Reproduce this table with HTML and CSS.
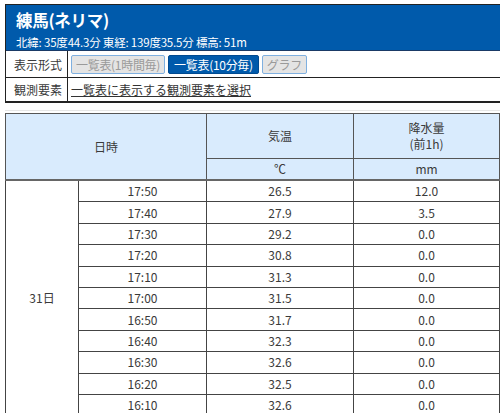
FILE: index.html
```html
<!DOCTYPE html>
<html lang="ja">
<head>
<meta charset="utf-8">
<link rel="stylesheet" href="styles.css">
</head>
<body>
<div class="page">
  <div class="station">
    <div class="station-head">
      <h1 class="station-name">練馬(ネリマ)</h1>
      <div class="station-meta">北緯: 35度44.3分 東経: 139度35.5分 標高: 51m</div>
    </div>
    <div class="opt-row">
      <div class="opt-label">表示形式</div>
      <div class="opt-body">
        <span class="btn btn-off">一覧表(1時間毎)</span>
        <span class="btn btn-on">一覧表(10分毎)</span>
        <span class="btn btn-off">グラフ</span>
      </div>
    </div>
    <div class="opt-row opt-last">
      <div class="opt-label">観測要素</div>
      <div class="opt-body"><a class="sel-link" href="#">一覧表に表示する観測要素を選択</a></div>
    </div>
  </div>

  <div class="table-wrap">
    <table class="data">
      <colgroup>
        <col class="c-day"><col class="c-time"><col class="c-temp"><col class="c-rain">
      </colgroup>
      <thead>
        <tr class="h1">
          <th colspan="2" rowspan="2">日時</th>
          <th>気温</th>
          <th>降水量<br>(前1h)</th>
        </tr>
        <tr class="h2">
          <th>℃</th>
          <th>mm</th>
        </tr>
      </thead>
      <tbody>
        <tr><td rowspan="11" class="day">31日</td><td>17:50</td><td>26.5</td><td>12.0</td></tr>
        <tr><td>17:40</td><td>27.9</td><td>3.5</td></tr>
        <tr><td>17:30</td><td>29.2</td><td>0.0</td></tr>
        <tr><td>17:20</td><td>30.8</td><td>0.0</td></tr>
        <tr><td>17:10</td><td>31.3</td><td>0.0</td></tr>
        <tr><td>17:00</td><td>31.5</td><td>0.0</td></tr>
        <tr><td>16:50</td><td>31.7</td><td>0.0</td></tr>
        <tr><td>16:40</td><td>32.3</td><td>0.0</td></tr>
        <tr><td>16:30</td><td>32.6</td><td>0.0</td></tr>
        <tr><td>16:20</td><td>32.5</td><td>0.0</td></tr>
        <tr><td>16:10</td><td>32.6</td><td>0.0</td></tr>
      </tbody>
    </table>
  </div>
</div>
</body>
</html>
```

FILE: styles.css
```css
html, body {
  margin: 0;
  padding: 0;
  background: #fff;
  overflow: hidden;
}
body {
  font-family: "Noto Sans CJK JP", "Noto Sans", sans-serif;
  color: #3a3a3a;
  font-size: 12px;
}
.page {
  padding: 4px 0 0 5px;
  width: 495px;
}
.station {
  border: 1px solid #222;
  border-right: none;
  border-bottom: 2px solid #222;
  margin-right: -20px;
}
.station-head {
  background: #005aab;
  color: #fff;
  padding: 4px 10px 0 10px;
  height: 41px;
  border-bottom: 1px solid #1a3a66;
}
.station-name {
  margin: 0;
  font-size: 16.5px;
  font-weight: bold;
  line-height: 22px;
  letter-spacing: -0.3px;
}
.station-meta {
  font-size: 11.5px;
  line-height: 16px;
  margin-top: 3px;
  letter-spacing: -0.2px;
}
.opt-row {
  display: flex;
  height: 26px;
  border-bottom: 1px solid #222;
}
.opt-last {
  height: 23px;
  border-bottom: none;
}
.opt-label {
  width: 62px;
  border-right: 1px solid #222;
  display: flex;
  align-items: center;
  padding-left: 8px;
  box-sizing: border-box;
  font-size: 12px;
}
.opt-body {
  display: flex;
  align-items: center;
  gap: 3px;
  padding-left: 3px;
}
.btn {
  display: inline-flex;
  align-items: center;
  height: 17px;
  padding: 0 4px;
  border: 1px solid #7fb0e0;
  border-radius: 2px;
  font-size: 12px;
  letter-spacing: -0.3px;
}
.btn-off {
  background: #e4e4e4;
  color: #9a9a9a;
}
.btn-on {
  background: #005aab;
  color: #fff;
  border-color: #004a90;
  padding: 0 5px;
}
.sel-link {
  color: #333;
  text-decoration: underline;
  font-size: 12px;
}
.table-wrap {
  margin-top: 7px;
  border-top: 1px solid #e6e6e6;
  padding-top: 2px;
}
.data {
  width: 494px;
  border-collapse: collapse;
  table-layout: fixed;
  border: 1px solid #333;
  font-size: 12px;
}
.c-day { width: 73px; }
.c-time { width: 128px; }
.c-temp { width: 147px; }
.c-rain { width: 146px; }
.data th {
  background: #d9ebfd;
  font-weight: normal;
  border: 1px solid #555;
  color: #3a3a3a;
  line-height: 16px;
  padding: 0;
}
.data .h1 th { height: 44px; }
.data .h2 th {
  height: 20px;
  border-top: 1px solid #8a8a8a;
  border-bottom: 2px solid #666;
}
.data .h1 th[rowspan] { border-bottom: 2px solid #666; }
.data td {
  text-align: center;
  border: 1px solid #444;
  height: 20.4px;
  padding: 0;
  line-height: 16px;
  color: #3a3a3a;
}
.data td.day { vertical-align: middle; }
```
